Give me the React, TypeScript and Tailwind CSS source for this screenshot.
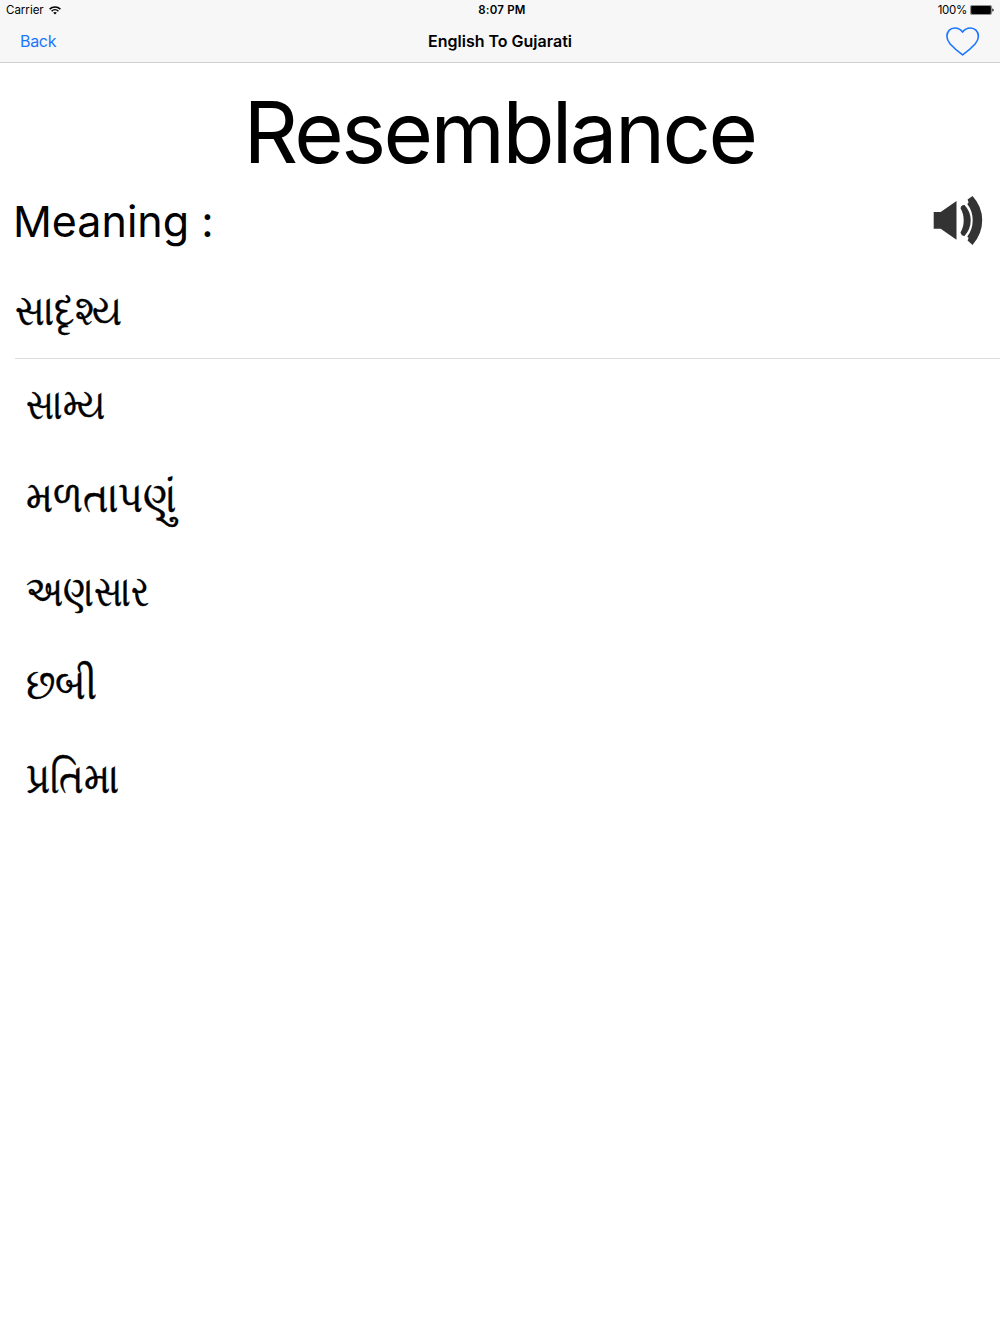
const meanings = [
  { text: 'સામ્ય', style: 'scale-x-[.8]' },
  { text: 'મળતાપણું', style: 'scale-x-[.889]' },
  { text: 'અણસાર', style: 'scale-x-[.816]' },
  { text: 'છબી', style: 'scale-x-[.886]' },
  { text: 'પ્રતિમા', style: 'scale-x-[.862]' },
]

function WifiIcon() {
  return (
    <svg className="w-3 h-[9px]" viewBox="0 0 12 9" fill="none" stroke="black" strokeWidth="1.5">
      <path d="M0.6 3.1a7.8 7.8 0 0 1 10.8 0" />
      <path d="M2.6 5.2a4.9 4.9 0 0 1 6.8 0" />
      <path d="M6 8.6 4.2 6.8a2.6 2.6 0 0 1 3.6 0z" fill="black" stroke="none" />
    </svg>
  )
}

function BatteryIcon() {
  return (
    <svg className="w-6 h-[10px]" viewBox="0 0 24 10">
      <rect x="0.4" y="0.4" width="21.2" height="9.2" rx="1.6" fill="none" stroke="#555" strokeWidth="0.7" />
      <rect x="1.1" y="1.1" width="19.8" height="7.8" rx="0.8" fill="black" />
      <path d="M22.4 3.4c1 .3 1.2.9 1.2 1.6s-.2 1.3-1.2 1.6z" fill="black" />
    </svg>
  )
}

function HeartIcon() {
  return (
    <svg className="w-[34px] h-[30px]" viewBox="0 0 34 30" fill="none" stroke="#1a75ff" strokeWidth="1.6" strokeLinejoin="round">
      <path d="M16.6 28.9C12.3 25.7 7.8 22 4.2 18C2 15.4 .9 13 .9 10.2C.9 5.5 4.2 2 8.7 2C12 2 14.9 3.4 16.6 6.2C18.3 3.4 21.2 2 24.5 2C29 2 32.4 5.5 32.4 10.2C32.4 13 31.3 15.4 29.1 18C25.5 22 21 25.7 16.6 28.9Z" />
    </svg>
  )
}

function SpeakerIcon() {
  return (
    <svg className="w-[50px] h-[50px]" viewBox="0 0 50 50" fill="#333">
      <path d="M.7 17h7L23.5 6v38.7L7.7 33.7h-7z" />
      <path d="M27.5 13.2Q28.5 9.5 31.5 10Q37.7 16.5 37.7 25.300T31.5 41Q28.5 41 27.5 37.500Q30.700 32 30.700 25.300T27.500 13.200z" />
      <path d="M34.6 4.5 39.5 1Q49.2 11.500 49.2 25.300T39.5 50L34.6 45.5 35.6 43 34.3 41.5Q39.7 34.500 39.7 25.300T34.3 9L35.6 7.5z" />
    </svg>
  )
}

export default function App() {
  return (
    <div className="w-full min-h-[1334px] bg-white text-black font-['Inter','Noto_Sans',sans-serif]">
      <header className="h-[63px] bg-[#f7f7f7] border-b border-[#cfcfcf]">
        <div className="h-5 grid grid-cols-3 items-center pl-[6px] pr-[6px] text-[11.5px] leading-5">
          <div className="flex items-center gap-[5px]">
            <span>Carrier</span>
            <WifiIcon />
          </div>
          <span className="text-center font-semibold tracking-[0.2px] pl-1">8:07 PM</span>
          <div className="flex items-center justify-end gap-[3px]">
            <span className="tracking-[-0.3px]">100%</span>
            <BatteryIcon />
          </div>
        </div>
        <div className="h-[42px] grid grid-cols-3 items-center px-5 text-base">
          <button className="text-left text-[#1a75ff] tracking-[-0.3px]">Back</button>
          <h1 className="text-center font-semibold">English To Gujarati</h1>
          <button className="flex justify-end" aria-label="Favourite">
            <HeartIcon />
          </button>
        </div>
      </header>

      <main>
        <h2 className="pt-6 pr-[1px] text-center text-[85px] leading-[92px] tracking-[-2.6px]">Resemblance</h2>
        <div className="mt-[13px] h-14 flex items-center justify-between pl-[13px] pr-[17px]">
          <p className="pt-[1px] text-[43px] leading-[56px]">Meaning :</p>
          <button aria-label="Listen">
            <SpeakerIcon />
          </button>
        </div>

        <div className="ml-[15px] h-[111px] border-b border-[#dcdcdc] pt-[33px] text-[43px] leading-[56px]">
          <p className="origin-left scale-x-[.85] [-webkit-text-stroke:0.4px_black]">સાદૃશ્ય</p>
        </div>
        <ul className="pl-[26px] -mt-[3px]">
          {meanings.map((item) => (
            <li key={item.text} className="h-[93.5px] flex items-center text-[43px] leading-[56px]">
              <span className={`origin-left [-webkit-text-stroke:0.4px_black] ${item.style}`}>{item.text}</span>
            </li>
          ))}
        </ul>
      </main>
    </div>
  )
}
